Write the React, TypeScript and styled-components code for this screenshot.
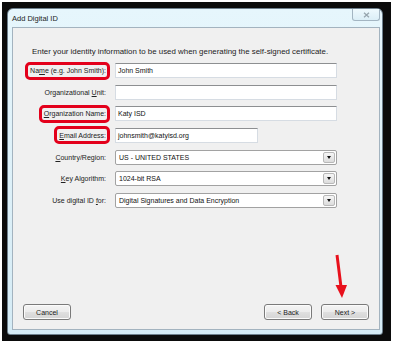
import React from "react";
import styled, { createGlobalStyle } from "styled-components";

const GlobalStyle = createGlobalStyle`
  html, body {
    margin: 0;
    padding: 0;
    background: #ffffff;
  }
  body {
    font-family: "Liberation Sans", Arial, sans-serif;
  }
`;

const Page = styled.div`
  width: 394px;
  height: 344px;
  box-sizing: border-box;
  padding: 2px 3px 3px 2px;
  background: #ffffff;
`;

const Frame = styled.div`
  height: 100%;
  box-sizing: border-box;
  display: flex;
  padding: 6px 8px 6px 5px;
  background: #0b0b0b;
`;

const Window = styled.div`
  flex: 1;
  display: flex;
  flex-direction: column;
  padding: 0 2px 4px 4px;
  border: 1px solid #6d7f8c;
  border-radius: 6px 6px 3px 3px;
  background: linear-gradient(#e6f6fc, #d5ebf5);
`;

const TitleBar = styled.div`
  height: 18px;
  display: flex;
  justify-content: space-between;
  align-items: center;
`;

const Title = styled.span`
  font-size: 7.5px;
  color: #1c1c1c;
`;

const CloseButton = styled.div`
  align-self: flex-start;
  width: 28px;
  height: 12px;
  box-sizing: border-box;
  display: flex;
  align-items: center;
  justify-content: center;
  border: 1px solid #a3b5c2;
  border-top: none;
  border-radius: 0 0 3px 3px;
  background: linear-gradient(#eef9fd, #dbeef7);
`;

const Panel = styled.div`
  flex: 1;
  position: relative;
  display: flex;
  flex-direction: column;
  border: 1px solid #a3b3bf;
  background: #f0f0f0;
`;

const Intro = styled.p`
  margin: 19px 0 0 19px;
  font-size: 7.9px;
  line-height: 10px;
  color: #1c1c1c;
`;

const Form = styled.div`
  display: grid;
  grid-template-columns: 97px 222px;
  grid-auto-rows: 15px;
  column-gap: 5px;
  row-gap: 6.67px;
  align-items: center;
  margin-top: 6px;
`;

const Label = styled.label<{ $marked?: boolean }>`
  justify-self: end;
  height: 18px;
  margin: -1.5px 0;
  box-sizing: border-box;
  display: flex;
  align-items: center;
  padding: 0 1px 0 2px;
  border: 3px solid ${(p) => (p.$marked ? "#e3001b" : "transparent")};
  border-radius: 5px;
  font-size: 7px;
  color: #222222;
  white-space: nowrap;
`;

const TextField = styled.div<{ $width?: number }>`
  width: ${(p) => (p.$width ? `${p.$width}px` : "100%")};
  height: 15px;
  box-sizing: border-box;
  display: flex;
  align-items: center;
  padding-left: 2px;
  border: 1px solid #d6dce3;
  border-top-color: #8d8f91;
  background: #ffffff;
  font-size: 7px;
  color: #111111;
`;

const Select = styled.div`
  height: 15px;
  box-sizing: border-box;
  display: flex;
  align-items: center;
  justify-content: space-between;
  padding: 0 1px 0 3px;
  border: 1px solid #a2a2a2;
  border-radius: 2px;
  background: #ffffff;
  font-size: 7px;
  color: #111111;
`;

const DropButton = styled.span`
  width: 12px;
  height: 11px;
  box-sizing: border-box;
  display: flex;
  align-items: center;
  justify-content: center;
  border: 1px solid #b8b8b8;
  border-radius: 2px;
  background: linear-gradient(#f6f6f6, #dcdcdc);

  &::after {
    content: "";
    border-left: 2.5px solid transparent;
    border-right: 2.5px solid transparent;
    border-top: 3px solid #111111;
  }
`;

const ButtonBar = styled.div`
  margin-top: auto;
  display: flex;
  gap: 9px;
  padding: 0 10px 9px 10px;
`;

const Button = styled.button<{ $pushRight?: boolean }>`
  width: 48px;
  height: 16px;
  padding: 0;
  margin-right: ${(p) => (p.$pushRight ? "auto" : "0")};
  border: 1px solid #7a7a7a;
  border-radius: 3px;
  background: linear-gradient(#f4f4f4, #ececec 50%, #e0e0e0 50%, #d4d4d4);
  box-shadow: inset 0 0 0 1px #fbfbfb;
  font-family: "Liberation Sans", Arial, sans-serif;
  font-size: 7px;
  color: #1c1c1c;
`;

const Arrow = styled.svg`
  position: absolute;
  left: 317px;
  top: 222px;
`;

const rows: { label: React.ReactNode; marked?: boolean; value: string; kind: "text" | "select"; width?: number }[] = [
  { label: <>Na<u>m</u>e (e.g. John Smith):</>, marked: true, value: "John Smith", kind: "text" },
  { label: <>Organizational <u>U</u>nit:</>, value: "", kind: "text" },
  { label: <><u>O</u>rganization Name:</>, marked: true, value: "Katy ISD", kind: "text" },
  { label: <><u>E</u>mail Address:</>, marked: true, value: "johnsmith@katyisd.org", kind: "text", width: 143 },
  { label: <><u>C</u>ountry/Region:</>, value: "US - UNITED STATES", kind: "select" },
  { label: <><u>K</u>ey Algorithm:</>, value: "1024-bit RSA", kind: "select" },
  { label: <>Use digital ID <u>f</u>or:</>, value: "Digital Signatures and Data Encryption", kind: "select" },
];

export default function App() {
  return (
    <Page>
      <GlobalStyle />
      <Frame>
        <Window>
          <TitleBar>
            <Title>Add Digital ID</Title>
            <CloseButton>
              <svg width="7" height="6" viewBox="0 0 7 6">
                <path d="M1 0.8 L6 5.2 M6 0.8 L1 5.2" stroke="#97a5ae" strokeWidth="1.3" />
              </svg>
            </CloseButton>
          </TitleBar>
          <Panel>
            <Intro>Enter your identity information to be used when generating the self-signed certificate.</Intro>
            <Form>
              {rows.map((r, i) => (
                <React.Fragment key={i}>
                  <Label $marked={r.marked}>
                    <span>{r.label}</span>
                  </Label>
                  {r.kind === "text" ? (
                    <TextField $width={r.width}>{r.value}</TextField>
                  ) : (
                    <Select>
                      <span>{r.value}</span>
                      <DropButton />
                    </Select>
                  )}
                </React.Fragment>
              ))}
            </Form>
            <ButtonBar>
              <Button $pushRight>Cancel</Button>
              <Button>&lt; Back</Button>
              <Button>Next &gt;</Button>
            </ButtonBar>
            <Arrow width="20" height="50" viewBox="0 0 20 50">
              <path d="M7 5 L11 37" stroke="#e8101c" strokeWidth="3" />
              <path d="M5.5 35 L17 35 L12 48 Z" fill="#e8101c" />
            </Arrow>
          </Panel>
        </Window>
      </Frame>
    </Page>
  );
}
